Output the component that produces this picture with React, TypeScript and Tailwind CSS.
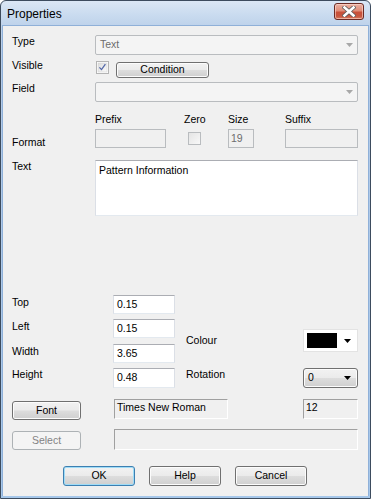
import React from "react";

const btn =
  "flex items-center justify-center rounded-[3px] border border-[#707070] bg-[linear-gradient(to_bottom,#f2f2f2_0%,#ebebeb_48%,#dddddd_52%,#cfcfcf_100%)] shadow-[inset_0_0_0_1px_#fcfcfc] text-black";
const btnDisabled =
  "flex items-center justify-center rounded-[3px] border border-[#adb2b5] bg-[#f4f4f4] text-[#838383]";
const textBox =
  "border border-[#abadb3] border-x-[#dbdfe6] border-b-[#e3e9ef] bg-white text-black";
const disabledBox = "border border-[#b9bcbf] bg-[#f0f0f0] text-[#6d6d6d]";
const sunken =
  "border border-t-[#a0a0a0] border-l-[#a0a0a0] border-b-white border-r-white bg-[#f0f0f0] text-black";

const Arrow = ({ color = "#000", w = 7 }: { color?: string; w?: number }) => (
  <svg width={w} height={4} viewBox="0 0 7 4">
    <path d="M0 0 H7 L3.5 4 Z" fill={color} />
  </svg>
);

const Label = ({ children, className = "" }: { children: React.ReactNode; className?: string }) => (
  <div className={`leading-[13px] ${className}`}>{children}</div>
);

const DisabledCombo = ({ text = "" }: { text?: string }) => (
  <div className="flex h-[20px] flex-1 items-center justify-between rounded-[2px] border border-[#b9bcbf] bg-[#f4f4f4] pl-[4px] pr-[4px] text-[#6d6d6d]">
    <span>{text}</span>
    <Arrow color="#a8a8a8" />
  </div>
);

const CheckedBox = () => (
  <svg width={13} height={13} viewBox="0 0 13 13">
    <defs>
      <linearGradient id="cbg" x1="0" y1="0" x2="1" y2="1">
        <stop offset="0" stopColor="#dcdcdc" />
        <stop offset="1" stopColor="#fbfbfb" />
      </linearGradient>
    </defs>
    <rect x="0.5" y="0.5" width="12" height="12" fill="#fff" stroke="#b4b4b4" />
    <rect x="2" y="2" width="9" height="9" fill="url(#cbg)" stroke="#cfcfcf" strokeWidth="0.5" />
    <path d="M3.4 6.4 L5.5 8.6 L9.4 3.2" fill="none" stroke="#5468a8" strokeWidth="1.3" />
  </svg>
);

const EmptyBox = () => (
  <div className="h-[13px] w-[13px] border border-[#b9bcbf] bg-[linear-gradient(135deg,#e4e4e4,#f8f8f8)]" />
);

export default function App() {
  return (
    <div className="h-[499px] w-[371px] font-['Liberation_Sans',Arial,sans-serif] text-[10.5px] text-black">
      <div className="flex h-full w-full flex-col rounded-t-[6px] border border-[#3d4c5e] bg-[linear-gradient(to_bottom,#dbe7f5_0px,#c9dbef_14px,#bfd3eb_24px,#b4cbe8_60px,#a6c7ea_100%)]">
        {/* title bar */}
        <div className="flex h-[24px] shrink-0 items-center justify-between pl-[6px] pr-[6px]">
          <span className="mt-[2px] text-[12px] text-black">Properties</span>
          <div className="mt-[-3px] flex h-[17px] w-[30px] items-center justify-center rounded-[3px] border border-[#6b2b24] bg-[linear-gradient(to_bottom,#eab1a3_0%,#e08d78_45%,#c9513a_55%,#c7563f_80%,#d67b5f_100%)] shadow-[inset_0_0_0_1px_rgba(255,220,210,0.6)]">
            <svg width={14} height={11} viewBox="0 0 14 11">
              <path d="M2.5 1.5 L11.5 9.5 M11.5 1.5 L2.5 9.5" stroke="#5b5b5b" strokeWidth="4.2" strokeLinecap="square" />
              <path d="M2.5 1.5 L11.5 9.5 M11.5 1.5 L2.5 9.5" stroke="#ffffff" strokeWidth="2.6" strokeLinecap="square" />
            </svg>
          </div>
        </div>

        {/* client */}
        <div className="mx-[1px] mb-[2px] flex flex-1 flex-col border-l border-r border-t border-[#8fb0d8] border-b-[#8fb0d8] bg-[#f0f0f0] pl-[9px] pr-[10px]">
          {/* Type */}
          <div className="mt-[9px] flex h-[20px]">
            <Label className="w-[83px]">Type</Label>
            <DisabledCombo text="Text" />
          </div>

          {/* Visible */}
          <div className="mt-[6px] flex h-[17px]">
            <Label className="-mt-[2px] w-[84px]">Visible</Label>
            <CheckedBox />
            <div className={`${btn} ml-[7px] mt-[1px] h-[16px] w-[93px]`}>Condition</div>
          </div>

          {/* Field */}
          <div className="mt-[4px] flex h-[20px]">
            <Label className="w-[83px]">Field</Label>
            <DisabledCombo />
          </div>

          {/* Format headers */}
          <div className="mt-[11px] flex h-[13px]">
            <div className="w-[83px]" />
            <Label className="w-[89px]">Prefix</Label>
            <Label className="w-[44px]">Zero</Label>
            <Label className="w-[57px]">Size</Label>
            <Label>Suffix</Label>
          </div>

          {/* Format */}
          <div className="mt-[3px] flex h-[19px]">
            <Label className="mt-[7px] w-[83px]">Format</Label>
            <div className="w-[89px]">
              <div className={`${disabledBox} h-[19px] w-[71px]`} />
            </div>
            <div className="w-[44px] pl-[4px] pt-[3px]">
              <EmptyBox />
            </div>
            <div className="w-[57px]">
              <div className={`${disabledBox} flex h-[19px] w-[26px] items-center pl-[2px]`}>19</div>
            </div>
            <div className={`${disabledBox} h-[19px] flex-1`} />
          </div>

          {/* Text */}
          <div className="mt-[12px] flex h-[56px]">
            <Label className="w-[83px]">Text</Label>
            <div className={`${textBox} flex-1 pl-[3px] pt-[3px] leading-[13px]`}>Pattern Information</div>
          </div>

          {/* Position / size */}
          <div className="mt-[79px] flex">
            <div className="flex flex-col">
              {[
                ["Top", "0.15", "mt-0", "h-[19px]", "mt-[1px]"],
                ["Left", "0.15", "mt-[5px]", "h-[19px]", "mt-[1px]"],
                ["Width", "3.65", "mt-[6px]", "h-[19px]", "mt-[1px]"],
                ["Height", "0.48", "mt-[5px]", "h-[20px]", "mt-0"],
              ].map(([l, v, mt, h, lmt]) => (
                <div key={l} className={`flex ${mt} ${h}`}>
                  <Label className={`w-[101px] ${lmt}`}>{l}</Label>
                  <div className={`${textBox} flex w-[62px] items-center pl-[3px]`}>{v}</div>
                </div>
              ))}
            </div>
            <div className="ml-[11px] flex flex-1 flex-col pt-[34px]">
              <div className="flex h-[23px] items-center justify-between">
                <Label>Colour</Label>
                <div className="flex h-[23px] w-[55px] items-center gap-[7px] border border-[#e3e3e3] bg-white pl-[3px]">
                  <div className="h-[15px] w-[30px] bg-black" />
                  <Arrow />
                </div>
              </div>
              <div className="mt-[16px] flex h-[20px] justify-between">
                <Label>Rotation</Label>
                <div className={`${btn} h-[20px] w-[55px] !justify-between pl-[4px] pr-[6px]`}>
                  <span>0</span>
                  <Arrow />
                </div>
              </div>
            </div>
          </div>

          {/* Font */}
          <div className="mt-[11px] flex h-[21px]">
            <div className={`${btn} mt-[2px] h-[19px] w-[69px]`}>Font</div>
            <div className={`${sunken} ml-[33px] h-[20px] w-[114px] pl-[2px] pt-[1px] leading-[13px]`}>Times New Roman</div>
            <div className="flex-1" />
            <div className={`${sunken} h-[20px] w-[55px] pl-[2px] pt-[1px] leading-[13px]`}>12</div>
          </div>

          {/* Select */}
          <div className="mt-[9px] flex h-[21px]">
            <div className={`${btnDisabled} mt-[2px] h-[19px] w-[69px]`}>Select</div>
            <div className={`${sunken} ml-[33px] h-[21px] flex-1`} />
          </div>

          {/* Buttons */}
          <div className="mt-[16px] flex justify-center gap-[14px]">
            <div className={`${btn} h-[20px] w-[72px] !border-[#3c7fb1] !shadow-[inset_0_0_0_1px_#9fdcf7]`}>OK</div>
            <div className={`${btn} h-[20px] w-[72px]`}>Help</div>
            <div className={`${btn} h-[20px] w-[72px]`}>Cancel</div>
          </div>
        </div>
      </div>
    </div>
  );
}
